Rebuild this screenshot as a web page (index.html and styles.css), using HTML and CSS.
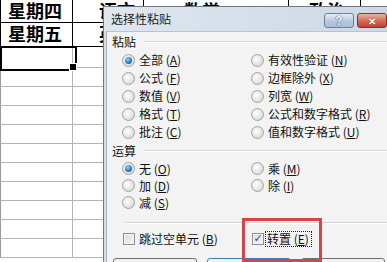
FILE: index.html
```html
<!DOCTYPE html>
<html lang="zh-CN">
<head>
<meta charset="utf-8">
<link rel="stylesheet" href="styles.css">
</head>
<body>
<div class="sheet">
  <div class="c a dk">星期四</div><div class="c b dk">语文</div><div class="c c3 dk">数学</div><div class="c d dk">政治</div><div class="c e dk"></div>
  <div class="c a dk">星期五</div><div class="c b dk">英语</div><div class="c c3 dk">体育</div><div class="c d dk">历史</div><div class="c e dk"></div>
  <div class="c a sel"></div><div class="c b"></div><div class="c c3"></div><div class="c d"></div><div class="c e"></div>
  <div class="c a"></div><div class="c b"></div><div class="c c3"></div><div class="c d"></div><div class="c e"></div>
  <div class="c a"></div><div class="c b"></div><div class="c c3"></div><div class="c d"></div><div class="c e"></div>
  <div class="c a"></div><div class="c b"></div><div class="c c3"></div><div class="c d"></div><div class="c e"></div>
  <div class="c a"></div><div class="c b"></div><div class="c c3"></div><div class="c d"></div><div class="c e"></div>
  <div class="c a"></div><div class="c b"></div><div class="c c3"></div><div class="c d"></div><div class="c e"></div>
  <div class="c a"></div><div class="c b"></div><div class="c c3"></div><div class="c d"></div><div class="c e"></div>
  <div class="c a"></div><div class="c b"></div><div class="c c3"></div><div class="c d"></div><div class="c e"></div>
  <div class="c a"></div><div class="c b"></div><div class="c c3"></div><div class="c d"></div><div class="c e"></div>
  <div class="c a"></div><div class="c b"></div><div class="c c3"></div><div class="c d"></div><div class="c e"></div>
  <div class="c a"></div><div class="c b"></div><div class="c c3"></div><div class="c d"></div><div class="c e"></div>
</div>

<div class="dlg">
  <div class="titlebar">
    <span class="title">选择性粘贴</span>
    <div class="tbtns">
      <span class="hbtn">?</span>
      <span class="xbtn">✕</span>
    </div>
  </div>
  <div class="client">
    <div class="grp"><span>粘贴</span><i class="gl"></i></div>
    <div class="opts">
      <div class="opt"><i class="radio on"></i>全部 (<u>A</u>)</div>
      <div class="opt"><i class="radio"></i>有效性验证 (<u>N</u>)</div>
      <div class="opt"><i class="radio"></i>公式 (<u>F</u>)</div>
      <div class="opt"><i class="radio"></i>边框除外 (<u>X</u>)</div>
      <div class="opt"><i class="radio"></i>数值 (<u>V</u>)</div>
      <div class="opt"><i class="radio"></i>列宽 (<u>W</u>)</div>
      <div class="opt"><i class="radio"></i>格式 (<u>T</u>)</div>
      <div class="opt"><i class="radio"></i>公式和数字格式 (<u>R</u>)</div>
      <div class="opt"><i class="radio"></i>批注 (<u>C</u>)</div>
      <div class="opt"><i class="radio"></i>值和数字格式 (<u>U</u>)</div>
    </div>
    <div class="grp grp2"><span>运算</span><i class="gl"></i></div>
    <div class="opts ops">
      <div class="opt"><i class="radio on"></i>无 (<u>O</u>)</div>
      <div class="opt"><i class="radio"></i>乘 (<u>M</u>)</div>
      <div class="opt"><i class="radio"></i>加 (<u>D</u>)</div>
      <div class="opt"><i class="radio"></i>除 (<u>I</u>)</div>
      <div class="opt"><i class="radio"></i>减 (<u>S</u>)</div>
      <div class="opt"></div>
    </div>
    <div class="sep"></div>
    <div class="opts checks">
      <div class="opt"><i class="cbox"></i>跳过空单元 (<u>B</u>)</div>
      <div class="opt"><i class="cbox on">✓</i><span class="focus">转置 (<u>E</u>)</span></div>
    </div>
    <div class="btns">
      <span class="btn">粘贴链接(<u>L</u>)</span>
      <span class="btn def">确定</span>
      <span class="btn">取消</span>
    </div>
  </div>
</div>

<div class="mark"></div>
</body>
</html>
```

FILE: styles.css
```css
* { box-sizing: border-box; }
html, body {
  margin: 0;
  padding: 0;
  width: 387px;
  height: 262px;
  overflow: hidden;
  background: #fff;
  position: relative;
  font-family: "Noto Sans CJK SC", "Liberation Sans", sans-serif;
}

/* spreadsheet */
.sheet {
  display: grid;
  grid-template-columns: 73px 71px 145px 72px 40px;
  grid-template-rows: 23px 24px 21px 19px repeat(9, 19px);
}
.c {
  border-right: 1px solid #b4b4b4;
  border-bottom: 1px solid #b4b4b4;
  font-size: 18px;
  font-weight: 700;
  line-height: 20px;
  color: #000;
  white-space: nowrap;
  overflow: hidden;
}
.a { border-left: 1px solid #9a9a9a; padding-left: 7px; }
.dk { border-right-color: #000; border-bottom-color: #000; }
.a.dk { border-left-color: #000; }
.b { padding-left: 26px; }
.c3 { padding-left: 40px; }
.d { padding-left: 20px; }
.sel { position: relative; overflow: visible; border-bottom-color: transparent; }
.sel::before {
  content: "";
  position: absolute;
  left: -1px;
  top: -1px;
  width: 73px;
  height: 21px;
  border: 2px solid #000;
}
.sel::after {
  content: "";
  position: absolute;
  left: 68px;
  top: 16px;
  width: 6px;
  height: 6px;
  background: #000;
  border: 1px solid #fff;
  z-index: 2;
}

/* dialog */
.dlg {
  position: absolute;
  left: 103px;
  top: 6px;
  width: 290px;
  height: 270px;
  border: 1px solid #6e7a88;
  background: #d6dfe9;
  display: flex;
  flex-direction: column;
}
.titlebar {
  height: 24px;
  flex: none;
  display: flex;
  align-items: center;
  background: linear-gradient(90deg, #dfe6ee, #ccd8e6);
  padding-left: 7px;
}
.title {
  font-size: 12px;
  line-height: 14px;
  color: #1c1c1c;
}
.tbtns {
  margin-left: auto;
  margin-right: 5px;
  align-self: flex-start;
  margin-top: 6px;
  display: flex;
  gap: 3px;
}
.hbtn, .xbtn {
  width: 30px;
  height: 15px;
  border-radius: 3px;
  display: flex;
  align-items: center;
  justify-content: center;
  font-size: 11px;
  font-weight: 700;
  line-height: 1;
  color: #fff;
}
.hbtn {
  border: 1px solid #6d7f96;
  background: linear-gradient(#e4ecf5, #b7c8dc 55%, #a9bdd4);
  text-shadow: 0 0 1px #31455e, 0 0 1px #31455e;
  font-family: "Liberation Sans", sans-serif;
  font-size: 12px;
}
.xbtn {
  border: 1px solid #8b3228;
  background: linear-gradient(#eab3a5, #d56e5b 50%, #c0412f);
  text-shadow: 0 0 1px #5a1a12;
  font-size: 10px;
}

.client {
  flex: 1;
  margin-left: 2px;
  border-left: 1px solid #a9b2bd;
  border-top: 1px solid #b9c3cf;
  background: #f3f3f3;
  padding-top: 1px;
  font-size: 12px;
  color: #111;
}
.grp {
  height: 18px;
  display: flex;
  align-items: center;
  padding-left: 5px;
  line-height: 14px;
}
.grp2 { margin-top: 1px; }
.gl {
  flex: 1;
  height: 2px;
  margin-left: 8px;
  border-top: 1px solid #d7d7d7;
  border-bottom: 1px solid #fff;
}
.opts {
  display: grid;
  grid-template-columns: 129px 1fr;
  grid-auto-rows: 18px;
  margin-left: 15px;
}
.ops { grid-auto-rows: 17px; }
.opt {
  display: flex;
  align-items: center;
  line-height: 14px;
  white-space: nowrap;
}
.opt u { text-decoration: underline; text-underline-offset: 1px; }
.radio {
  width: 13px;
  height: 13px;
  border-radius: 50%;
  border: 1px solid #a2a2a2;
  background: radial-gradient(circle at 40% 40%, #ffffff, #e2e2e2 60%, #cfcfcf);
  margin-right: 4px;
  flex: none;
  position: relative;
}
.radio.on::after {
  content: "";
  position: absolute;
  left: 2px;
  top: 2px;
  width: 7px;
  height: 7px;
  border-radius: 50%;
  background: radial-gradient(circle at 40% 35%, #9fd2f5, #2c78c0 55%, #164f8e);
}
.sep {
  margin: 11px 0 0 18px;
  height: 2px;
  border-top: 1px solid #d4d4d4;
  border-bottom: 1px solid #fff;
}
.checks {
  margin-top: 6px;
  margin-left: 16px;
}
.cbox {
  width: 12px;
  height: 12px;
  border: 1px solid #8e8f8f;
  background: linear-gradient(135deg, #dcdcdc, #f6f6f6);
  box-shadow: inset 0 0 0 1px #f4f4f4;
  margin-right: 4px;
  flex: none;
  font-style: normal;
  font-size: 11px;
  font-weight: 700;
  line-height: 10px;
  text-align: center;
  color: #3b3f8f;
  font-family: "DejaVu Sans", sans-serif;
}
.cbox.on { margin-right: 1px; }
.focus {
  border: 1px dotted #222;
  padding: 0 2px 0 1px;
  line-height: 14px;
}
.btns {
  margin-top: 10px;
  margin-left: 6px;
  display: flex;
  gap: 10px;
}
.btn {
  width: 84px;
  height: 22px;
  border: 1px solid #707070;
  border-radius: 3px;
  background: linear-gradient(#f2f2f2, #ebebeb 50%, #dddddd);
  font-size: 12px;
  display: flex;
  align-items: center;
  justify-content: center;
}
.btn.def { border-color: #3c7fb1; }

/* annotation */
.mark {
  position: absolute;
  left: 242px;
  top: 218px;
  width: 80px;
  height: 44px;
  border: 3px solid #d8434b;
}
```
